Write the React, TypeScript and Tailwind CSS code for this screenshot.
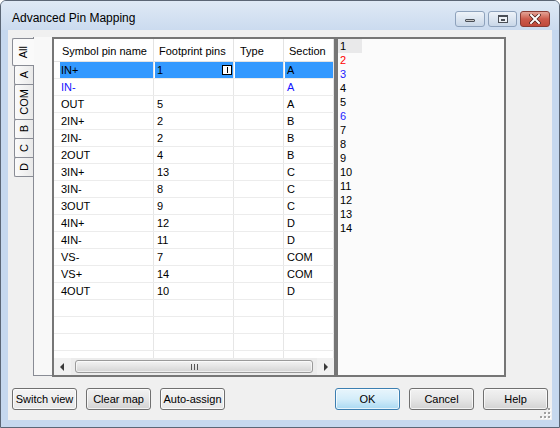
import React from "react";

const rows: { c: string[]; sel?: boolean; blue?: boolean }[] = [
  { c: ["IN+", "1", "", "A"], sel: true },
  { c: ["IN-", "", "", "A"], blue: true },
  { c: ["OUT", "5", "", "A"] },
  { c: ["2IN+", "2", "", "B"] },
  { c: ["2IN-", "2", "", "B"] },
  { c: ["2OUT", "4", "", "B"] },
  { c: ["3IN+", "13", "", "C"] },
  { c: ["3IN-", "8", "", "C"] },
  { c: ["3OUT", "9", "", "C"] },
  { c: ["4IN+", "12", "", "D"] },
  { c: ["4IN-", "11", "", "D"] },
  { c: ["VS-", "7", "", "COM"] },
  { c: ["VS+", "14", "", "COM"] },
  { c: ["4OUT", "10", "", "D"] },
  { c: ["", "", "", ""] },
  { c: ["", "", "", ""] },
  { c: ["", "", "", ""] },
  { c: ["", "", "", ""] },
];

const listItems: { t: string; color: string }[] = [
  { t: "1", color: "text-black" },
  { t: "2", color: "text-[#ff0000]" },
  { t: "3", color: "text-[#2222ff]" },
  { t: "4", color: "text-black" },
  { t: "5", color: "text-black" },
  { t: "6", color: "text-[#2222ff]" },
  { t: "7", color: "text-black" },
  { t: "8", color: "text-black" },
  { t: "9", color: "text-black" },
  { t: "10", color: "text-black" },
  { t: "11", color: "text-black" },
  { t: "12", color: "text-black" },
  { t: "13", color: "text-black" },
  { t: "14", color: "text-black" },
];

function Tab({ label, h, sel }: { label: string; h: string; sel?: boolean }) {
  return (
    <div
      className={
        sel
          ? `relative z-10 w-[22px] ${h} flex items-center justify-center bg-[#fafafa] border border-r-0 border-[#898c95] rounded-l-[2px]`
          : `ml-[2px] w-[19px] ${h} -mt-px flex items-center justify-center bg-gradient-to-r from-[#fbfbfb] to-[#e9e9e9] border border-r-0 border-[#898c95] rounded-l-[2px]`
      }
    >
      <span className="[writing-mode:vertical-rl] rotate-180 leading-none">{label}</span>
    </div>
  );
}

function Btn({ children, kind }: { children: React.ReactNode; kind?: "def" | "flat" }) {
  const base =
    "w-[65px] h-[22px] rounded-[3px] border flex items-center justify-center text-[11px] text-black leading-none";
  if (kind === "def")
    return (
      <div
        className={`${base} border-[#3c7fb1] bg-gradient-to-b from-[#e8f5fc] via-[#d4edfa] to-[#a9d9f2] shadow-[inset_0_0_0_1px_rgba(255,255,255,0.7)]`}
      >
        {children}
      </div>
    );
  if (kind === "flat")
    return (
      <div
        className={`${base} border-[#707070] bg-gradient-to-b from-[#f4f4f4] to-[#e8e8e8] shadow-[inset_0_0_0_1px_rgba(255,255,255,0.8)]`}
      >
        {children}
      </div>
    );
  return (
    <div
      className={`${base} border-[#707070] bg-gradient-to-b from-[#f2f2f2] via-[#e6e6e6] to-[#d2d2d2] shadow-[inset_0_0_0_1px_rgba(255,255,255,0.7)]`}
    >
      {children}
    </div>
  );
}

function Cell({
  w,
  text,
  sel,
  blue,
  pad,
  first,
  edit,
}: {
  w: string;
  text: string;
  sel?: boolean;
  blue?: boolean;
  pad: string;
  first?: boolean;
  edit?: boolean;
}) {
  return (
    <div className={`${w} h-full flex border-r border-[#e6e6e6] ${first ? "pl-[6px]" : "pl-px"}`}>
      <div
        className={`relative flex-1 h-full flex items-center ${pad} whitespace-nowrap ${
          sel ? "bg-[#3399ff]" : ""
        } ${blue ? "text-[#1515ff]" : "text-black"} ${first ? "" : ""}`}
      >
        {text}
        {edit && (
          <div className="absolute right-[1px] top-[3px] w-[10px] h-[10px] bg-white border border-black flex items-center justify-center">
            <div className="w-px h-[6px] bg-black" />
          </div>
        )}
      </div>
    </div>
  );
}

export default function App() {
  return (
    <div className="w-[560px] h-[428px] flex flex-col bg-[#c6d8ee] border border-[#5b6675] rounded-t-[6px] overflow-hidden font-['Liberation_Sans',Arial,sans-serif] text-[11px] text-black select-none">
      {/* Title bar */}
      <div className="h-[29px] shrink-0 flex items-start justify-between pl-[11px] pr-[9px] bg-gradient-to-b from-[#dfe9f5] to-[#cbdbef]">
        <span className="text-[12px] mt-[11px] leading-none text-black">Advanced Pin Mapping</span>
        <div className="flex gap-[3px] mt-[10px]">
          <div className="w-[30px] h-[16px] rounded-[3px] border border-[#8ea2bc] bg-gradient-to-b from-[#eef3f9] to-[#c9d7e8] flex items-end justify-center pb-[4px]">
            <div className="w-[10px] h-[3px] bg-[#c8c8c8] border border-[#4a4f57] rounded-[1px]" />
          </div>
          <div className="w-[29px] h-[16px] rounded-[3px] border border-[#8ea2bc] bg-gradient-to-b from-[#eef3f9] to-[#c9d7e8] flex items-center justify-center">
            <div className="w-[10px] h-[8px] border border-[#4a4f57] border-t-2 bg-[#eef2f7] flex items-center justify-center">
              <div className="w-[4px] h-[2px] border border-[#4a4f57]" />
            </div>
          </div>
          <div className="w-[30px] h-[16px] rounded-[3px] border border-[#8a3b34] bg-gradient-to-b from-[#e3a397] via-[#cc5a4c] to-[#c04a3c] flex items-center justify-center">
            <svg width="12" height="10" viewBox="0 0 12 10">
              <path d="M2 1 L10 9 M10 1 L2 9" stroke="#4a1c17" strokeWidth="3.4" strokeLinecap="square" />
              <path d="M2 1 L10 9 M10 1 L2 9" stroke="#ffffff" strokeWidth="2" strokeLinecap="square" />
            </svg>
          </div>
        </div>
      </div>

      {/* Client */}
      <div className="relative flex-1 mx-[7px] mb-[7px] bg-[#f0f0f0] flex flex-col pl-[4px] pr-[4px] pt-[7px] pb-[10px]">
        <div className="h-[340px] flex">
          {/* Vertical tabs */}
          <div className="w-[21px] flex flex-col pt-[1px]">
            <Tab label="All" h="h-[28px]" sel />
            <Tab label="A" h="h-[20px]" />
            <Tab label="COM" h="h-[36px]" />
            <Tab label="B" h="h-[20px]" />
            <Tab label="C" h="h-[20px]" />
            <Tab label="D" h="h-[20px]" />
          </div>
          {/* tab page strip */}
          <div className="w-[19px] h-[339px] bg-[#f8f8f8] border-l border-b border-[#898c95]" />
          {/* Grid */}
          <div className="w-[284px] h-[340px] border-2 border-[#767676] bg-white flex flex-col">
            <div className="h-[23px] flex border-b border-[#e3e3e3] bg-white">
              <div className="w-[100px] h-full flex items-center pl-[8px] pt-[2px] border-r border-[#e3e3e3]">Symbol pin name</div>
              <div className="w-[80px] h-full flex items-center pl-[5px] pt-[2px] border-r border-[#e3e3e3]">Footprint pins</div>
              <div className="w-[50px] h-full flex items-center pl-[6px] pt-[2px] border-r border-[#e3e3e3]">Type</div>
              <div className="w-[50px] h-full flex items-center pl-[5px] pt-[2px] border-r border-[#e3e3e3]">Section</div>
            </div>
            <div className="h-[296px] overflow-hidden">
              {rows.map((r, i) => (
                <div key={i} className="h-[17px] flex border-b border-[#ececec]">
                  <Cell w="w-[100px]" first text={r.c[0]} sel={r.sel} blue={r.blue} pad="pl-px" />
                  <Cell w="w-[80px]" text={r.c[1]} sel={r.sel} pad="pl-[2px]" edit={r.sel} />
                  <Cell w="w-[50px]" text={r.c[2]} sel={r.sel} pad="pl-[2px]" />
                  <Cell w="w-[50px]" text={r.c[3]} sel={r.sel} blue={r.blue} pad="pl-[2px]" />
                </div>
              ))}
            </div>
            {/* horizontal scrollbar */}
            <div className="h-[17px] flex bg-[#f1f1f1]">
              <div className="w-[17px] h-full flex items-center justify-center">
                <svg width="5" height="8" viewBox="0 0 5 8">
                  <path d="M4 0 L4 8 L0 4 Z" fill="#3a3a3a" />
                </svg>
              </div>
              <div className="flex-1 h-full py-[2px] pl-[4px] pr-[4px] bg-[#ececec]">
                <div className="w-[238px] h-full rounded-[3px] border border-[#9a9a9a] bg-gradient-to-b from-[#f3f3f3] via-[#e4e4e4] to-[#d4d4d4] shadow-[inset_0_0_0_1px_rgba(255,255,255,0.6)] flex items-center justify-center gap-[2px]">
                  <div className="w-px h-[6px] bg-[#555]" />
                  <div className="w-px h-[6px] bg-[#555]" />
                  <div className="w-px h-[6px] bg-[#555]" />
                </div>
              </div>
              <div className="w-[17px] h-full flex items-center justify-center">
                <svg width="5" height="8" viewBox="0 0 5 8">
                  <path d="M1 0 L1 8 L5 4 Z" fill="#3a3a3a" />
                </svg>
              </div>
            </div>
          </div>
          {/* Right list */}
          <div className="w-[170px] h-[340px] border-2 border-[#767676] bg-[#fbfbfb] flex flex-col">
            {listItems.map((it, i) => (
              <div key={i} className="h-[14px] flex items-center">
                <div className={`pl-[2px] w-[24px] h-full flex items-center ${i === 0 ? "bg-[#e9e9ea]" : ""} ${it.color}`}>
                  {it.t}
                </div>
              </div>
            ))}
          </div>
        </div>

        <div className="mt-[11px] h-[22px] flex justify-between">
          <div className="flex gap-[9px]">
            <Btn kind="flat">Switch view</Btn>
            <Btn>Clear map</Btn>
            <Btn kind="flat">Auto-assign</Btn>
          </div>
          <div className="flex gap-[9px]">
            <Btn kind="def">OK</Btn>
            <Btn>Cancel</Btn>
            <Btn>Help</Btn>
          </div>
        </div>

        {/* resize grip */}
        <svg className="absolute right-[1px] bottom-[1px]" width="11" height="11" viewBox="0 0 11 11">
          {[
            [8, 0],
            [8, 4],
            [4, 4],
            [8, 8],
            [4, 8],
            [0, 8],
          ].map(([x, y], i) => (
            <g key={i}>
              <rect x={x + 1} y={y + 1} width="2" height="2" fill="#ffffff" />
              <rect x={x} y={y} width="2" height="2" fill="#a0a0a0" />
            </g>
          ))}
        </svg>
      </div>
    </div>
  );
}
